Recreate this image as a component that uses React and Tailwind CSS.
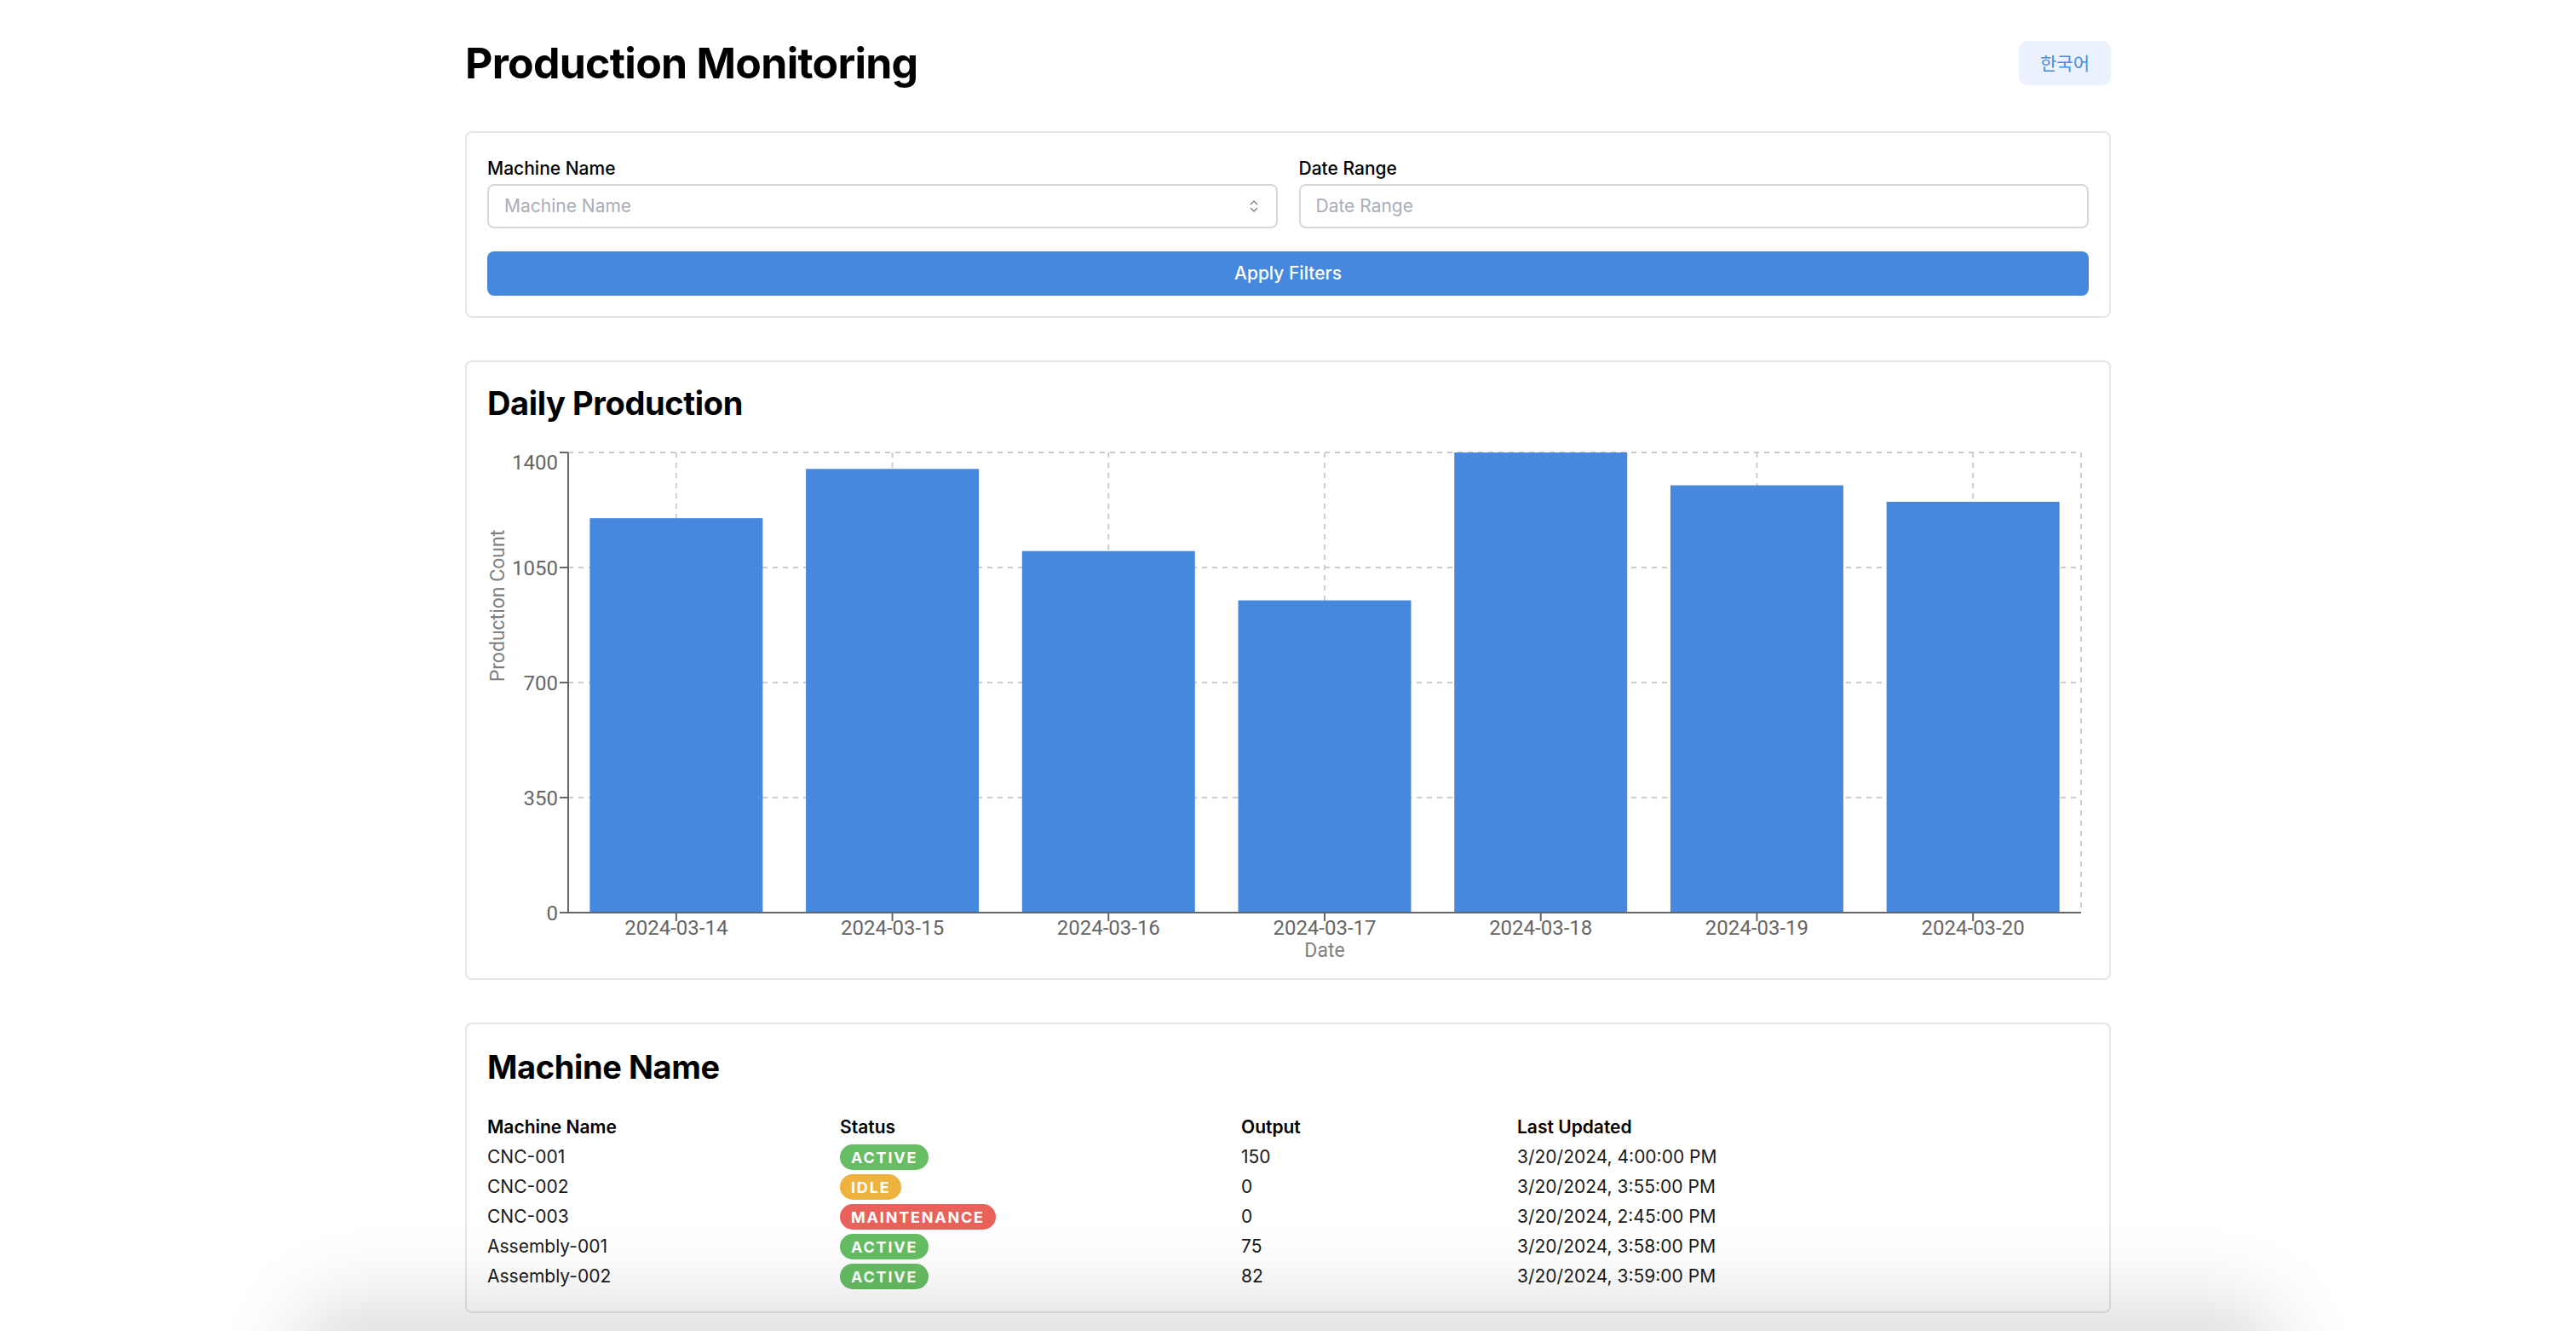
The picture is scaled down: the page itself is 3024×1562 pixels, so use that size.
import React from 'react';
import { ChevronsUpDown } from 'lucide-react';

const dailyData = [
  { date: '2024-03-14', count: 1200 },
  { date: '2024-03-15', count: 1350 },
  { date: '2024-03-16', count: 1100 },
  { date: '2024-03-17', count: 950 },
  { date: '2024-03-18', count: 1400 },
  { date: '2024-03-19', count: 1300 },
  { date: '2024-03-20', count: 1250 },
];

const machines = [
  { name: 'CNC-001', status: 'active', output: 150, updated: '3/20/2024, 4:00:00 PM' },
  { name: 'CNC-002', status: 'idle', output: 0, updated: '3/20/2024, 3:55:00 PM' },
  { name: 'CNC-003', status: 'maintenance', output: 0, updated: '3/20/2024, 2:45:00 PM' },
  { name: 'Assembly-001', status: 'active', output: 75, updated: '3/20/2024, 3:58:00 PM' },
  { name: 'Assembly-002', status: 'active', output: 82, updated: '3/20/2024, 3:59:00 PM' },
];

const statusColors = {
  active: 'bg-[#66bd63]',
  idle: 'bg-[#eeb33f]',
  maintenance: 'bg-[#e8615a]',
};

const StatusBadge = ({ status }) => (
  <span
    className={`inline-flex h-[30px] items-center rounded-full px-[13px] text-[18px] font-bold uppercase tracking-[0.1em] text-white ${statusColors[status]}`}
  >
    {status}
  </span>
);

// Bar chart drawn by hand, sized to the card
const ProductionChart = () => {
  const W = 1880;
  const H = 617;
  const left = 95;
  const right = 1871;
  const top = 24;
  const bottom = 564;
  const max = 1400;
  const ticks = [0, 350, 700, 1050, 1400];
  const band = (right - left) / dailyData.length;
  const y = (v) => bottom - (v / max) * (bottom - top);
  const chartFont = { fontFamily: 'Roboto, "Liberation Sans", sans-serif', overflow: 'visible' };

  return (
    <svg width={W} height={H} className="block" style={chartFont}>
      {/* grid */}
      {ticks.map((t) => (
        <line key={`h${t}`} x1={left} x2={right} y1={y(t)} y2={y(t)} stroke="#ccc" strokeWidth="2" strokeDasharray="6 6" />
      ))}
      {dailyData.map((d, i) => (
        <line
          key={`v${d.date}`}
          x1={left + band * (i + 0.5)}
          x2={left + band * (i + 0.5)}
          y1={top}
          y2={bottom}
          stroke="#ccc"
          strokeWidth="2"
          strokeDasharray="6 6"
        />
      ))}
      <line x1={right} x2={right} y1={top} y2={bottom} stroke="#ccc" strokeWidth="2" strokeDasharray="6 6" />

      {/* bars */}
      {dailyData.map((d, i) => {
        const bw = band * 0.8;
        const bx = left + band * i + band * 0.1;
        return <rect key={d.date} x={bx} y={y(d.count)} width={bw} height={bottom - y(d.count)} fill="#4688dd" />;
      })}

      {/* y axis */}
      <line x1={left} x2={left} y1={top} y2={bottom} stroke="#666" strokeWidth="2" />
      {ticks.map((t) => (
        <g key={`yt${t}`}>
          <line x1={left - 10} x2={left} y1={y(t)} y2={y(t)} stroke="#666" strokeWidth="2" />
          <text
            x={left - 12}
            y={t === max ? y(t) + 11 : y(t)}
            dy="0.355em"
            textAnchor="end"
            fontSize="24"
            fill="#666"
          >
            {t}
          </text>
        </g>
      ))}
      <text
        x={12}
        y={204}
        transform="rotate(-90 12 204)"
        textAnchor="middle"
        dominantBaseline="central"
        fontSize="23"
        fill="#808080"
      >
        Production Count
      </text>

      {/* x axis */}
      <line x1={left} x2={right} y1={bottom} y2={bottom} stroke="#666" strokeWidth="2" />
      {dailyData.map((d, i) => {
        const cx = left + band * (i + 0.5);
        return (
          <g key={`xt${d.date}`}>
            <line x1={cx} x2={cx} y1={bottom} y2={bottom + 10} stroke="#666" strokeWidth="2" />
            <text x={cx} y={582} dominantBaseline="central" textAnchor="middle" fontSize="24" fill="#666">
              {d.date}
            </text>
          </g>
        );
      })}
      <text x={(left + right) / 2} y={608} dominantBaseline="central" textAnchor="middle" fontSize="23" fill="#808080">
        Date
      </text>
    </svg>
  );
};

const Card = ({ children, className = '' }) => (
  <div className={`rounded-[8px] border-2 border-[#e2e5ea] bg-white p-[24px] ${className}`}>{children}</div>
);

export default function App() {
  return (
    <div className="relative min-h-screen bg-white text-black" style={{ fontFamily: 'Inter, "Noto Sans", sans-serif' }}>
      <div className="mx-auto w-[1932px] pt-[40px]">
        {/* Header */}
        <div className="mb-[46px] flex h-[68px] items-center justify-between">
          <h1 className="text-[50px] font-bold leading-none tracking-[-0.015em]">Production Monitoring</h1>
          <button
            className="h-[52px] rounded-[10px] bg-[#ebf2fd] px-[25px] text-[21px] text-[#4a89dc]"
            style={{ fontFamily: '"Noto Sans CJK KR", sans-serif' }}
          >
            한국어
          </button>
        </div>

        {/* Filters */}
        <Card className="mb-[50px]">
          <div className="grid grid-cols-2 gap-[25px]">
            <div>
              <label className="mb-[4px] mt-[4px] block h-[28px] text-[21px] font-medium leading-[28px]">Machine Name</label>
              <div className="relative">
                <div className="flex h-[52px] items-center rounded-[8px] border-2 border-[#d5d8dd] px-[18px] text-[21px] text-[#a9aeb8]">
                  Machine Name
                </div>
                <ChevronsUpDown
                  className="absolute right-[19px] top-1/2 -translate-y-1/2 text-[#6b7280]"
                  size={18}
                  strokeWidth={1.5}
                />
              </div>
            </div>
            <div>
              <label className="mb-[4px] mt-[4px] block h-[28px] text-[21px] font-medium leading-[28px]">Date Range</label>
              <div className="flex h-[52px] items-center rounded-[8px] border-2 border-[#d5d8dd] px-[18px] text-[21px] text-[#a9aeb8]">
                Date Range
              </div>
            </div>
          </div>
          <button className="mt-[27px] flex h-[52px] w-full items-center justify-center rounded-[8px] bg-[#4688dd] text-[21px] font-medium text-white">
            Apply Filters
          </button>
        </Card>

        {/* Chart */}
        <Card className="mb-[50px]">
          <h2 className="mb-[14px] mt-[4px] text-[38px] font-bold leading-[40px] tracking-[-0.01em]">Daily Production</h2>
          <ProductionChart />
        </Card>

        {/* Machines table */}
        <Card>
          <h2 className="mb-[32px] mt-[4px] text-[38px] font-bold leading-[44px] tracking-[-0.01em]">Machine Name</h2>
          <table className="w-full table-fixed text-left text-[21px]">
            <colgroup>
              <col className="w-[414px]" />
              <col className="w-[471px]" />
              <col className="w-[324px]" />
              <col />
            </colgroup>
            <thead>
              <tr className="h-[34px]">
                <th className="font-semibold">Machine Name</th>
                <th className="font-semibold">Status</th>
                <th className="font-semibold">Output</th>
                <th className="font-semibold">Last Updated</th>
              </tr>
            </thead>
            <tbody>
              {machines.map((m) => (
                <tr key={m.name} className="h-[35px] text-[#1a1a1a]">
                  <td>{m.name}</td>
                  <td>
                    <StatusBadge status={m.status} />
                  </td>
                  <td>{m.output}</td>
                  <td>{m.updated}</td>
                </tr>
              ))}
            </tbody>
          </table>
        </Card>
      </div>

      {/* shadow cast from below the window edge */}
      <div className="pointer-events-none fixed bottom-[-70px] left-[380px] right-[380px] z-10 h-[70px] rounded-full shadow-[0_0_90px_40px_rgba(0,0,0,0.13)]" />
    </div>
  );
}
